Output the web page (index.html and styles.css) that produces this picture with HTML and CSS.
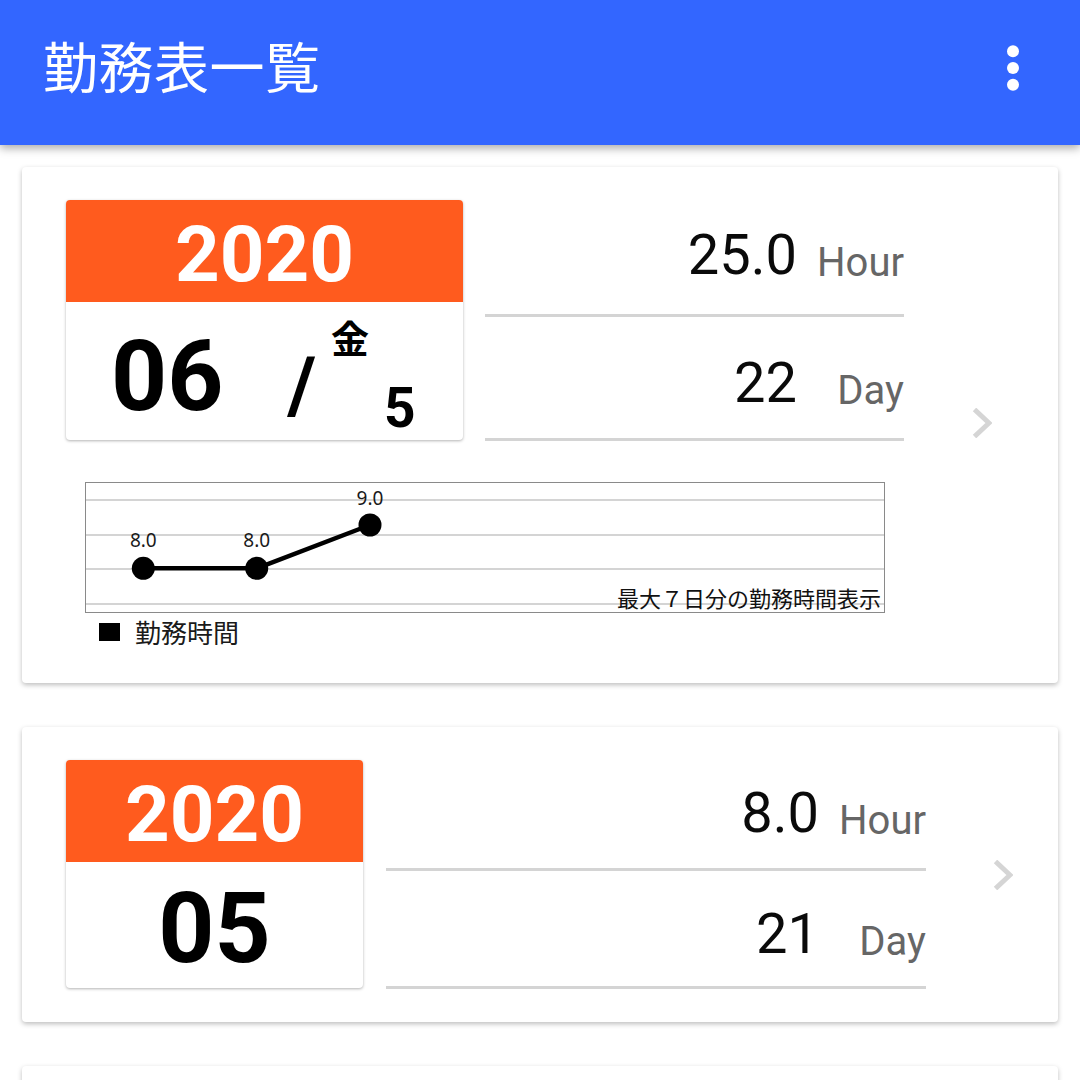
FILE: index.html
```html
<!DOCTYPE html>
<html lang="ja">
<head>
<meta charset="utf-8">
<title>勤務表一覧</title>
<link rel="stylesheet" href="styles.css">
</head>
<body>
<header class="appbar">
  <h1 class="appbar-title">勤務表一覧</h1>
  <svg class="kebab" width="12" height="46" viewBox="0 0 12 46" aria-label="メニュー">
    <circle cx="6" cy="6.3" r="6" fill="#fff"/>
    <circle cx="6" cy="23" r="6" fill="#fff"/>
    <circle cx="6" cy="39.7" r="6" fill="#fff"/>
  </svg>
</header>

<main class="list">
  <section class="card card--chart">
    <div class="card-main">
      <div class="summary">
        <div class="cal cal--wide">
          <div class="cal-year">2020</div>
          <div class="cal-date cal-date--full">
            <span class="cal-month">06</span>
            <span class="cal-slash">/</span>
            <span class="cal-day">
              <span class="cal-dow">金</span>
              <span class="cal-dnum">5</span>
            </span>
          </div>
        </div>
        <div class="stats stats--narrow">
          <div class="stat-row stat-row--a">
            <span class="stat-num">25.0</span><span class="stat-unit">Hour</span>
          </div>
          <div class="stat-row stat-row--b">
            <span class="stat-num">22</span><span class="stat-unit">Day</span>
          </div>
        </div>
      </div>
      <svg class="chart" width="800" height="131" viewBox="0 0 800 131">
        <g stroke="#c6c6c6" stroke-width="1.5">
          <line x1="0" y1="18" x2="800" y2="18"/>
          <line x1="0" y1="53" x2="800" y2="53"/>
          <line x1="0" y1="87" x2="800" y2="87"/>
          <line x1="0" y1="122" x2="800" y2="122"/>
        </g>
        <rect x="0.5" y="0.5" width="799" height="130" fill="none" stroke="#8a8a8a" stroke-width="1"/>
        <polyline points="58.3,86.3 171.7,86.3 285,43" fill="none" stroke="#000" stroke-width="4.5" stroke-linejoin="round"/>
        <circle cx="58.3" cy="86.3" r="11.5" fill="#000"/>
        <circle cx="171.7" cy="86.3" r="11.5" fill="#000"/>
        <circle cx="285" cy="43" r="11.5" fill="#000"/>
        <g class="chart-label" text-anchor="middle">
          <text x="58.3" y="65">8.0</text>
          <text x="171.7" y="65">8.0</text>
          <text x="285" y="23">9.0</text>
        </g>
        <text class="chart-note" x="796" y="124.5" text-anchor="end">最大７日分の勤務時間表示</text>
      </svg>
      <div class="legend">
        <span class="legend-box"></span>
        <span class="legend-text">勤務時間</span>
      </div>
    </div>
    <svg class="chev" width="20" height="30" viewBox="0 0 20 30">
      <polyline points="2.5,1.5 17,15 2.5,28.5" fill="none" stroke="#d5d5d5" stroke-width="5"/>
    </svg>
  </section>

  <section class="card card--plain">
    <div class="card-main">
      <div class="summary">
        <div class="cal cal--narrow">
          <div class="cal-year">2020</div>
          <div class="cal-date cal-date--month">
            <span class="cal-month">05</span>
          </div>
        </div>
        <div class="stats stats--wide">
          <div class="stat-row stat-row--c">
            <span class="stat-num">8.0</span><span class="stat-unit">Hour</span>
          </div>
          <div class="stat-row stat-row--d">
            <span class="stat-num">21</span><span class="stat-unit">Day</span>
          </div>
        </div>
      </div>
    </div>
    <svg class="chev chev--plain" width="20" height="30" viewBox="0 0 20 30">
      <polyline points="2.5,1.5 17,15 2.5,28.5" fill="none" stroke="#d5d5d5" stroke-width="5"/>
    </svg>
  </section>

  <section class="card card--peek" aria-hidden="true"></section>
</main>
</body>
</html>
```

FILE: styles.css
```css
* { box-sizing: border-box; }

html, body {
  margin: 0;
  padding: 0;
  background: #ffffff;
  font-family: Roboto, "Noto Sans CJK JP", sans-serif;
  overflow: hidden;
}

/* ---------- app bar ---------- */
.appbar {
  position: relative;
  z-index: 2;
  height: 145px;
  background: #3366ff;
  display: flex;
  align-items: center;
  justify-content: space-between;
  padding: 0 61px 0 43px;
  box-shadow: 0 3px 9px rgba(0, 0, 0, 0.35);
}

.appbar-title {
  margin: 0 0 17px 0;
  font: 400 55px/1 "Noto Sans CJK JP", sans-serif;
  letter-spacing: 0.5px;
  color: #ffffff;
}

.kebab {
  display: block;
  margin-bottom: 9px;
}

/* ---------- list ---------- */
.list {
  display: flex;
  flex-direction: column;
  gap: 44px;
  padding: 22px 22px 0 22px;
}

.card {
  background: #ffffff;
  border-radius: 4px;
  box-shadow: 0 2px 5px rgba(0, 0, 0, 0.26);
  display: flex;
  align-items: center;
  padding: 33px 0 33px 44px;
}

.card--chart {
  padding-bottom: 38px;
}

.card--peek {
  height: 295px;
  flex-shrink: 0;
}

.card-main {
  display: flex;
  flex-direction: column;
}

.summary {
  display: flex;
  align-items: flex-start;
}

/* ---------- calendar block ---------- */
.cal {
  background: #ffffff;
  border-radius: 4px;
  overflow: hidden;
  box-shadow: 0 1px 3px rgba(0, 0, 0, 0.3);
  display: flex;
  flex-direction: column;
}

.cal--wide { width: 397px; height: 240px; }
.cal--narrow { width: 297px; height: 228px; }

.cal-year {
  height: 102px;
  background: #ff5b1e;
  color: #ffffff;
  font: 700 78px/1 Roboto, sans-serif;
  text-align: center;
  padding-top: 16px;
}

.cal-date {
  flex: 1;
  display: flex;
  align-items: flex-start;
  color: #000000;
}

.cal-date--month {
  justify-content: center;
}

.cal-month {
  font: 700 98px/1 Roboto, sans-serif;
}

.cal-date--full .cal-month {
  margin: 26px 0 0 45px;
}

.cal-date--month .cal-month {
  margin-top: 18px;
}

.cal-slash {
  font: 700 77px/1 Roboto, sans-serif;
  margin: 46px 0 0 64px;
}

.cal-day {
  display: flex;
  flex-direction: column;
  align-items: flex-start;
  margin-left: 15px;
}

.cal-dow {
  font: 700 38px/1 "Noto Sans CJK JP", sans-serif;
  margin-top: 16px;
}

.cal-dnum {
  font: 700 55px/1 Roboto, sans-serif;
  margin: 25px 0 0 53px;
}

/* ---------- stats ---------- */
.stats {
  display: flex;
  flex-direction: column;
}

.stats--narrow { width: 419px; margin-left: 22px; }
.stats--wide { width: 540px; margin-left: 23px; }

.stat-row {
  display: flex;
  align-items: flex-end;
  border-bottom: 3px solid #d4d4d4;
}

.stat-row--a { height: 117px; padding-bottom: 31px; }
.stat-row--b { height: 124px; padding-bottom: 27px; }
.stat-row--c { height: 111px; padding-bottom: 27px; }
.stat-row--d { height: 118px; padding-bottom: 24px; }

.stat-num {
  flex: 1;
  text-align: right;
  font: 400 56px/1 Roboto, sans-serif;
  color: #0a0a0a;
}

.stat-unit {
  width: 107px;
  text-align: right;
  font: 400 40px/1 Roboto, sans-serif;
  color: #666666;
}

/* ---------- chevron ---------- */
.chev {
  display: block;
  margin-left: 68px;
}

.chev--plain {
  margin-left: 67px;
}

/* ---------- chart ---------- */
.chart {
  display: block;
  margin: 41px 0 0 19px;
}

.chart-label {
  font-family: "Noto Sans", sans-serif;
  font-size: 19px;
  fill: #1a1a1a;
}

.chart-note {
  font-family: "Noto Sans CJK JP", sans-serif;
  font-size: 22px;
  fill: #111111;
}

.legend {
  display: flex;
  align-items: center;
  margin: 6px 0 0 33px;
}

.legend-box {
  width: 21px;
  height: 18px;
  background: #000000;
}

.legend-text {
  margin-left: 15px;
  font: 400 26px/1 "Noto Sans CJK JP", sans-serif;
  color: #1a1a1a;
}
```
